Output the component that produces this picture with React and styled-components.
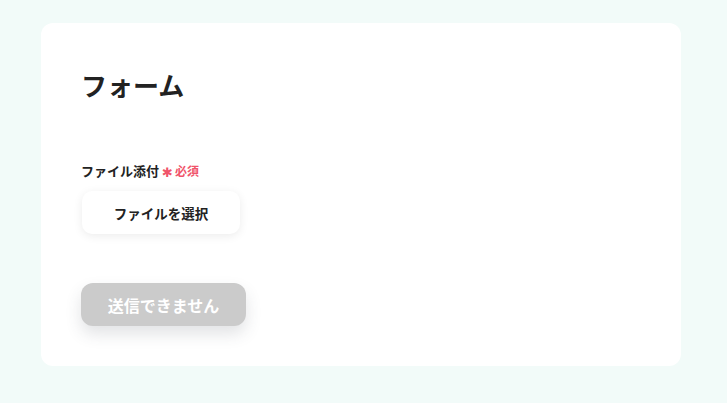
import React from 'react'
import styled, { createGlobalStyle } from 'styled-components'

const GlobalStyle = createGlobalStyle`
  html, body {
    margin: 0;
    background: #f2fbf9;
    font-family: "Noto Sans CJK JP", "Noto Sans", sans-serif;
  }
`

const Page = styled.div`
  padding: 23px 46px 37px 41px;
`

const Card = styled.div`
  width: 640px;
  height: 343px;
  box-sizing: border-box;
  background: #fff;
  border-radius: 12px;
  padding: 49px 40px 0 40px;
`

const Title = styled.h1`
  margin: 0;
  font-size: 26px;
  font-weight: 700;
  line-height: 1;
  color: #222;
`

const Field = styled.div`
  margin-top: 64px;
`

const Label = styled.div`
  display: flex;
  align-items: center;
  height: 18px;
  font-size: 13px;
  font-weight: 700;
  line-height: 18px;
  color: #222;
`

const Required = styled.span`
  margin-left: 3px;
  color: #f0546a;
  font-size: 12px;
  font-weight: 700;
  display: flex;
  align-items: center;
  gap: 2px;
`

const Star = styled.span`
  font-family: "DejaVu Sans", sans-serif;
  font-size: 13px;
  line-height: 18px;
  margin-top: 3px;
`

const FileButton = styled.button`
  margin-top: 11px;
  margin-left: 1px;
  width: 158px;
  height: 43px;
  border: none;
  border-radius: 10px;
  background: #fff;
  box-shadow: 0 2px 10px rgba(0, 0, 0, 0.08);
  font-family: inherit;
  font-size: 13.5px;
  font-weight: 700;
  color: #222;
`

const Submit = styled.button`
  display: block;
  margin-top: 49px;
  width: 165px;
  height: 43px;
  border: none;
  border-radius: 12px;
  background: #cbcbcb;
  color: #fff;
  font-family: inherit;
  font-size: 16px;
  font-weight: 700;
  box-shadow: 0 8px 16px rgba(60, 70, 80, 0.15);
`

export default function App() {
  return (
    <Page>
      <GlobalStyle />
      <Card>
        <Title>フォーム</Title>
        <Field>
          <Label>
            ファイル添付
            <Required>
              <Star>✱</Star>必須
            </Required>
          </Label>
          <FileButton>ファイルを選択</FileButton>
        </Field>
        <Submit disabled>送信できません</Submit>
      </Card>
    </Page>
  )
}
